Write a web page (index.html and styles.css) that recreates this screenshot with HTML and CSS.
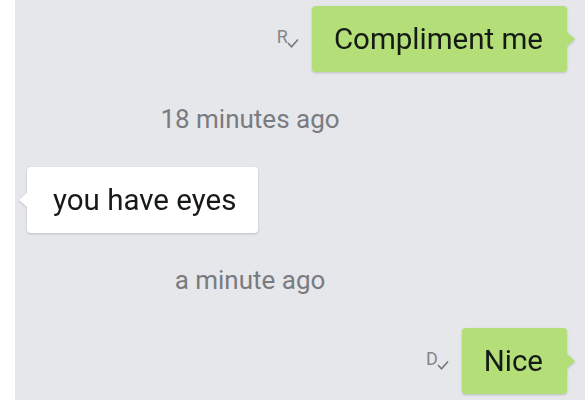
FILE: index.html
```html
<!DOCTYPE html>
<html lang="en">
<head>
    <meta charset="UTF-8">
    <meta name="viewport" content="width=device-width, initial-scale=1.0">
    <title>Conversation</title>
    <link rel="stylesheet" href="styles.css">
</head>
<body>
    <div class="edge"></div>
    <div class="chat">
        <div class="row row-out">
            <div class="receipt">
                <span class="receipt-letter">R</span>
                <svg class="receipt-check" width="12" height="10" viewBox="0 0 12 10">
                    <path d="M1 5 L4.5 8.8 L11 1.5" fill="none" stroke="#74777a" stroke-width="1.6"/>
                </svg>
            </div>
            <div class="bubble bubble-out">Compliment me</div>
        </div>

        <div class="stamp">18 minutes ago</div>

        <div class="row row-in">
            <div class="bubble bubble-in">you have eyes</div>
        </div>

        <div class="stamp">a minute ago</div>

        <div class="row row-out">
            <div class="receipt">
                <span class="receipt-letter">D</span>
                <svg class="receipt-check" width="12" height="10" viewBox="0 0 12 10">
                    <path d="M1 5 L4.5 8.8 L11 1.5" fill="none" stroke="#74777a" stroke-width="1.6"/>
                </svg>
            </div>
            <div class="bubble bubble-out">Nice</div>
        </div>
    </div>
</body>
</html>
```

FILE: styles.css
```css
* {
    margin: 0;
    padding: 0;
    box-sizing: border-box;
}

body {
    font-family: Roboto, 'Noto Sans', sans-serif;
    background-color: #ffffff;
    display: flex;
    width: 585px;
    height: 400px;
    overflow: hidden;
}

.edge {
    width: 15px;
    background: #ffffff;
}

.chat {
    flex: 1;
    background-color: #e6e7eb;
    padding: 6px 18px 0 12px;
    display: flex;
    flex-direction: column;
}

.row {
    display: flex;
    align-items: center;
}

.row-out {
    justify-content: flex-end;
}

.row-in {
    justify-content: flex-start;
}

.bubble {
    position: relative;
    height: 66px;
    line-height: 66px;
    padding: 0 24px 0 22px;
    font-size: 29.5px;
    color: #161a16;
    border-radius: 4px;
    filter: drop-shadow(0 1px 1px rgba(0, 0, 0, 0.18));
}

.bubble-out {
    background-color: #b4de77;
}

.bubble-in {
    background-color: #ffffff;
    padding: 0 22px 0 26px;
}

/* little pointer on the side of each bubble */
.bubble::after {
    content: "";
    position: absolute;
    top: 25px;
    width: 9px;
    height: 16px;
    background: inherit;
}

.bubble-out::after {
    right: -8px;
    clip-path: polygon(0 0, 100% 50%, 0 100%);
}

.bubble-in::after {
    left: -8px;
    clip-path: polygon(100% 0, 0 50%, 100% 100%);
}

.receipt {
    display: flex;
    align-items: flex-start;
    margin-right: 13px;
    margin-top: -2px;
    color: #85878a;
}

.receipt-letter {
    font-size: 18px;
    line-height: 18px;
}

.receipt-check {
    margin-top: 10px;
    margin-left: -1px;
}

.stamp {
    height: 95px;
    line-height: 95px;
    font-size: 26px;
    color: #797b7f;
    text-align: center;
    padding-right: 94px;
}
```
